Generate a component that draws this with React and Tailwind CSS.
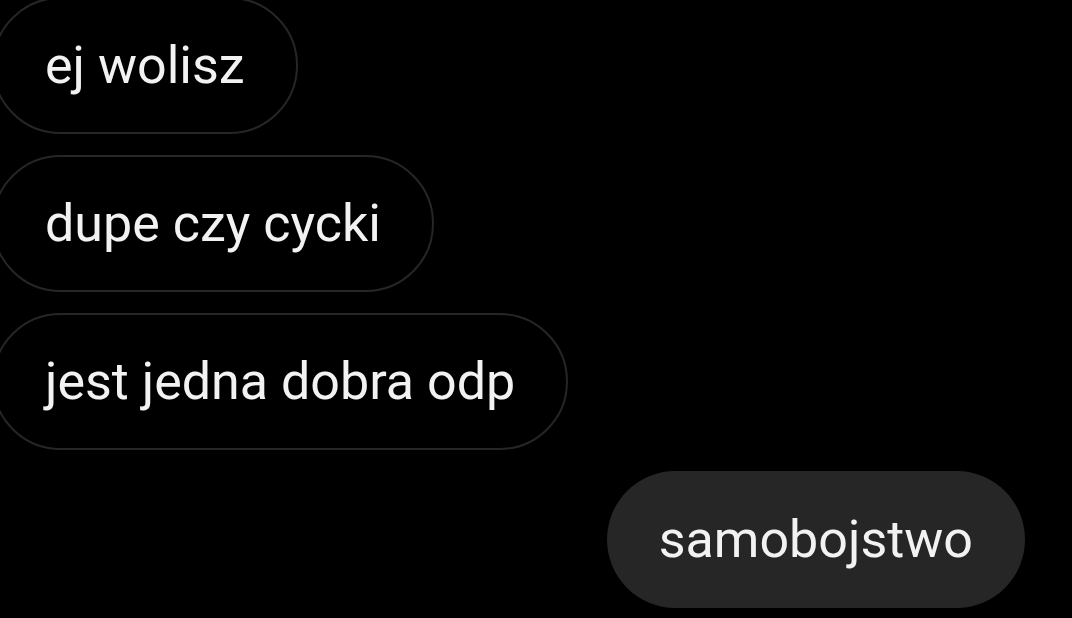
import React from 'react';

const incoming = ['ej wolisz', 'dupe czy cycki', 'jest jedna dobra odp'];

const Bubble = ({ text, mine }) => (
  <div
    className={
      mine
        ? 'h-[137px] flex items-center rounded-full bg-[#262626] px-[52px] self-end mr-[47px]'
        : 'h-[137px] flex items-center rounded-full border-2 border-[#262626] bg-black pl-[51px] pr-[51px] self-start'
    }
  >
    <span className="text-[52px] leading-none text-[#f2f2f2] whitespace-nowrap">{text}</span>
  </div>
);

export default function App() {
  return (
    <div
      className="w-[1072px] h-[618px] bg-black overflow-hidden"
      style={{ fontFamily: 'Roboto, "Noto Sans", sans-serif' }}
    >
      <div className="flex flex-col gap-[21px] -mt-[3px] -ml-[8px]">
        {incoming.map((t) => (
          <Bubble key={t} text={t} />
        ))}
        <Bubble text="samobojstwo" mine />
      </div>
    </div>
  );
}
